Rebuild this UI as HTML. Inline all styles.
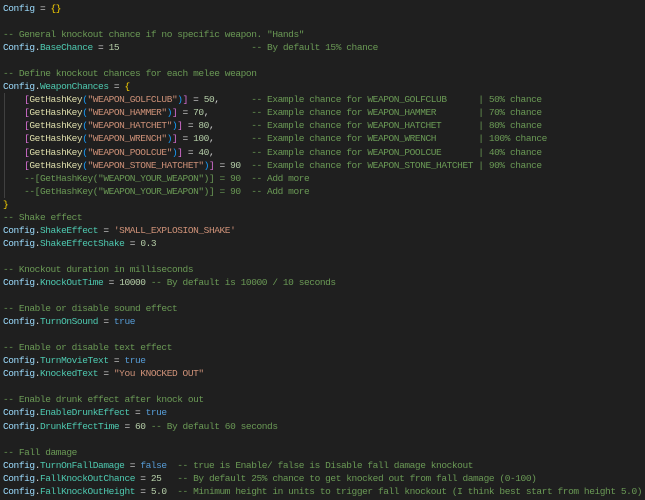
<!DOCTYPE html>
<html><head><meta charset="utf-8"><style>
html,body{margin:0;padding:0;background:#1f1f1f;width:645px;height:500px;overflow:hidden}
pre{margin:0;padding:2px 0 0 3px;font-family:"Liberation Mono","DejaVu Sans Mono",monospace;font-size:9.5px;letter-spacing:-0.42px;line-height:13.05px;color:#d4d4d4;white-space:pre;position:relative}
.c{color:#9cdcfe}.p{color:#4ec9b0}.k{color:#6a9955}.n{color:#b5cea8}.s{color:#ce9178}
.y{color:#ffd700}.m{color:#da70d6}.b{color:#179fff}.f{color:#dcdcaa}.t{color:#569cd6}
.g{position:absolute;left:4px;top:93px;width:1px;height:105px;background:#404040}
</style></head><body><pre><div class="g"></div><span class="c">Config</span> = <span class="y">{}</span>

<span class="k">-- General knockout chance if no specific weapon. "Hands"</span>
<span class="c">Config</span>.<span class="p">BaseChance</span> = <span class="n">15</span>                         <span class="k">-- By default 15% chance</span>

<span class="k">-- Define knockout chances for each melee weapon</span>
<span class="c">Config</span>.<span class="p">WeaponChances</span> = <span class="y">{</span>
    <span class="m">[</span><span class="f">GetHashKey</span><span class="b">(</span><span class="s">"WEAPON_GOLFCLUB"</span><span class="b">)</span><span class="m">]</span> = <span class="n">50</span>,      <span class="k">-- Example chance for WEAPON_GOLFCLUB      | 50% chance</span>
    <span class="m">[</span><span class="f">GetHashKey</span><span class="b">(</span><span class="s">"WEAPON_HAMMER"</span><span class="b">)</span><span class="m">]</span> = <span class="n">70</span>,        <span class="k">-- Example chance for WEAPON_HAMMER        | 70% chance</span>
    <span class="m">[</span><span class="f">GetHashKey</span><span class="b">(</span><span class="s">"WEAPON_HATCHET"</span><span class="b">)</span><span class="m">]</span> = <span class="n">80</span>,       <span class="k">-- Example chance for WEAPON_HATCHET       | 80% chance</span>
    <span class="m">[</span><span class="f">GetHashKey</span><span class="b">(</span><span class="s">"WEAPON_WRENCH"</span><span class="b">)</span><span class="m">]</span> = <span class="n">100</span>,       <span class="k">-- Example chance for WEAPON_WRENCH        | 100% chance</span>
    <span class="m">[</span><span class="f">GetHashKey</span><span class="b">(</span><span class="s">"WEAPON_POOLCUE"</span><span class="b">)</span><span class="m">]</span> = <span class="n">40</span>,       <span class="k">-- Example chance for WEAPON_POOLCUE       | 40% chance</span>
    <span class="m">[</span><span class="f">GetHashKey</span><span class="b">(</span><span class="s">"WEAPON_STONE_HATCHET"</span><span class="b">)</span><span class="m">]</span> = <span class="n">90</span>  <span class="k">-- Example chance for WEAPON_STONE_HATCHET | 90% chance</span>
    <span class="k">--[GetHashKey("WEAPON_YOUR_WEAPON")] = 90  -- Add more</span>
    <span class="k">--[GetHashKey("WEAPON_YOUR_WEAPON")] = 90  -- Add more</span>
<span class="y">}</span>
<span class="k">-- Shake effect</span>
<span class="c">Config</span>.<span class="p">ShakeEffect</span> = <span class="s">'SMALL_EXPLOSION_SHAKE'</span>
<span class="c">Config</span>.<span class="p">ShakeEffectShake</span> = <span class="n">0.3</span>

<span class="k">-- Knockout duration in milliseconds</span>
<span class="c">Config</span>.<span class="p">KnockOutTime</span> = <span class="n">10000</span> <span class="k">-- By default is 10000 / 10 seconds</span>

<span class="k">-- Enable or disable sound effect</span>
<span class="c">Config</span>.<span class="p">TurnOnSound</span> = <span class="t">true</span>

<span class="k">-- Enable or disable text effect</span>
<span class="c">Config</span>.<span class="p">TurnMovieText</span> = <span class="t">true</span>
<span class="c">Config</span>.<span class="p">KnockedText</span> = <span class="s">"You KNOCKED OUT"</span>

<span class="k">-- Enable drunk effect after knock out</span>
<span class="c">Config</span>.<span class="p">EnableDrunkEffect</span> = <span class="t">true</span>
<span class="c">Config</span>.<span class="p">DrunkEffectTime</span> = <span class="n">60</span> <span class="k">-- By default 60 seconds</span>

<span class="k">-- Fall damage</span>
<span class="c">Config</span>.<span class="p">TurnOnFallDamage</span> = <span class="t">false</span>  <span class="k">-- true is Enable/ false is Disable fall damage knockout</span>
<span class="c">Config</span>.<span class="p">FallKnockOutChance</span> = <span class="n">25</span>   <span class="k">-- By default 25% chance to get knocked out from fall damage (0-100)</span>
<span class="c">Config</span>.<span class="p">FallKnockOutHeight</span> = <span class="n">5.0</span>  <span class="k">-- Minimum height in units to trigger fall knockout (I think best start from height 5.0)</span></pre></body></html>
